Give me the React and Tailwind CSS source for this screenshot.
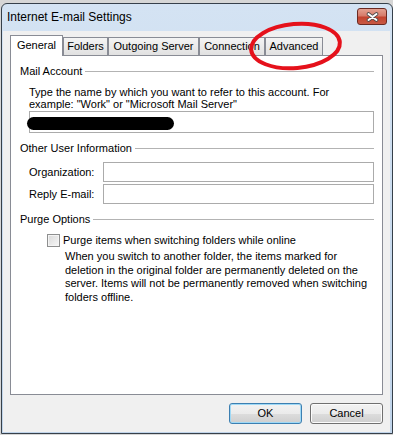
import React from 'react';

const tabs = [
  { name: 'General', cls: 'w-[53px] h-[21px] pb-[2px] bg-white border-b-0' },
  { name: 'Folders', cls: 'w-[45px] h-[18px] mb-[1px] border-b-0 bg-linear-to-b from-[#f4f4f4] to-[#e1e1e1]' },
  { name: 'Outgoing Server', cls: 'w-[91px] h-[18px] mb-[1px] border-b-0 bg-linear-to-b from-[#f4f4f4] to-[#e1e1e1]' },
  { name: 'Connection', cls: 'w-[66px] h-[18px] mb-[1px] border-b-0 bg-linear-to-b from-[#f4f4f4] to-[#e1e1e1]' },
  { name: 'Advanced', cls: 'w-[58px] h-[18px] mb-[1px] border-b-0 bg-linear-to-b from-[#f4f4f4] to-[#e1e1e1]' },
];

function GroupHeader({ title }) {
  return (
    <div className="flex items-center h-[14px] leading-[14px]">
      <span className="whitespace-nowrap">{title}</span>
      <div className="flex-1 h-px bg-[#b3b3b3] ml-[3px]" />
    </div>
  );
}

function Button({ label, isDefault }) {
  return (
    <button
      className={`w-[73px] h-[21px] rounded-[3px] border text-[11px] leading-[13px] bg-[linear-gradient(#f2f2f2_0%,#ebebeb_50%,#dddddd_50%,#cfcfcf_100%)] ${
        isDefault
          ? 'border-[#3c7fb1] shadow-[inset_0_0_0_1px_#9fd9f6]'
          : 'border-[#707070] shadow-[inset_0_0_0_1px_#fbfbfb]'
      }`}
    >
      {label}
    </button>
  );
}

export default function App() {
  return (
    <div className="relative w-[393px] h-[435px] overflow-hidden bg-[#d6d6d6] pt-[3px] pl-[1px] font-['Liberation_Sans',Arial,sans-serif] text-[11px] text-black">
      <div className="w-[392px] h-[431px] border border-[#36404a] rounded-t-[6px] bg-linear-to-b from-[#d4e3f3] to-[#c0d4ea] flex flex-col">
        {/* Title bar */}
        <div className="h-[27px] shrink-0 flex items-start justify-between">
          <span className="pl-[5px] pt-[6px] text-[12px] leading-[14px]">Internet E-mail Settings</span>
          <div className="mt-[4px] mr-[5px] w-[30px] h-[17px] rounded-[3px] border border-[#6b2a22] bg-[linear-gradient(#e4a191_0%,#d67b6a_45%,#c3432f_55%,#c85a45_100%)] flex items-center justify-center">
            <svg width="13" height="10" viewBox="0 0 13 10">
              <path d="M2.5 2 L10.5 8 M10.5 2 L2.5 8" stroke="#4a4a4a" strokeWidth="3.6" strokeLinecap="round" />
              <path d="M2.5 2 L10.5 8 M10.5 2 L2.5 8" stroke="#ffffff" strokeWidth="2" strokeLinecap="round" />
            </svg>
          </div>
        </div>

        {/* Client area */}
        <div className="flex-1 ml-[1px] mr-[2px] mb-[1px] bg-[#f0f0f0] px-[7px] pt-[4px] pb-[7px] flex flex-col">
          <div className="relative z-10 h-[21px] flex items-end">
            {tabs.map((t) => (
              <div
                key={t.name}
                className={`flex items-center justify-center border border-[#898c95] whitespace-nowrap leading-[13px] ${t.cls}`}
              >
                {t.name}
              </div>
            ))}
          </div>

          <div className="-mt-px h-[340px] border border-[#898c95] bg-white pl-[9px] pr-[8px] pt-[8px]">
            <GroupHeader title="Mail Account" />
            <div className="ml-[9px] mt-[8px] leading-[12px]">
              <div className="whitespace-nowrap">Type the name by which you want to refer to this account. For</div>
              <div className="whitespace-nowrap">example: "Work" or "Microsoft Mail Server"</div>
            </div>
            <div className="relative ml-[9px] mt-[1px] h-[22px] border border-[#ababab] bg-white">
              <div className="absolute -left-[3px] top-[5px] w-[147px] h-[13px] rounded-full bg-black" />
            </div>

            <div className="mt-[8px]">
              <GroupHeader title="Other User Information" />
            </div>
            <div className="ml-[9px] mt-[7px] flex items-center">
              <span className="w-[74px] shrink-0">Organization:</span>
              <div className="flex-1 h-[20px] border border-[#ababab] bg-white" />
            </div>
            <div className="ml-[9px] mt-[2px] flex items-center">
              <span className="w-[74px] shrink-0">Reply E-mail:</span>
              <div className="flex-1 h-[20px] border border-[#ababab] bg-white" />
            </div>

            <div className="mt-[8px]">
              <GroupHeader title="Purge Options" />
            </div>
            <div className="ml-[27px] mt-[8px] flex items-center gap-[3px] leading-[13px]">
              <div className="w-[13px] h-[13px] border border-[#8e8f8f] bg-linear-to-br from-[#d9d9d9] to-[#f7f7f7] shadow-[inset_0_0_0_1px_#f4f4f4]" />
              <span className="whitespace-nowrap">Purge items when switching folders while online</span>
            </div>
            <div className="ml-[45px] mt-[3px] leading-[13.5px]">
              <div className="whitespace-nowrap">When you switch to another folder, the items marked for</div>
              <div className="whitespace-nowrap">deletion in the original folder are permanently deleted on the</div>
              <div className="whitespace-nowrap">server. Items will not be permanently removed when switching</div>
              <div className="whitespace-nowrap">folders offline.</div>
            </div>
          </div>

          <div className="mt-[8px] flex justify-end gap-[8px]">
            <Button label="OK" isDefault />
            <Button label="Cancel" />
          </div>
        </div>
      </div>

      {/* red annotation circle */}
      <svg className="absolute inset-0 z-20 pointer-events-none" width="393" height="435">
        <ellipse cx="295.5" cy="46" rx="44.5" ry="22" fill="none" stroke="#e5111b" strokeWidth="4" transform="rotate(-5 295.5 46)" />
      </svg>
    </div>
  );
}
